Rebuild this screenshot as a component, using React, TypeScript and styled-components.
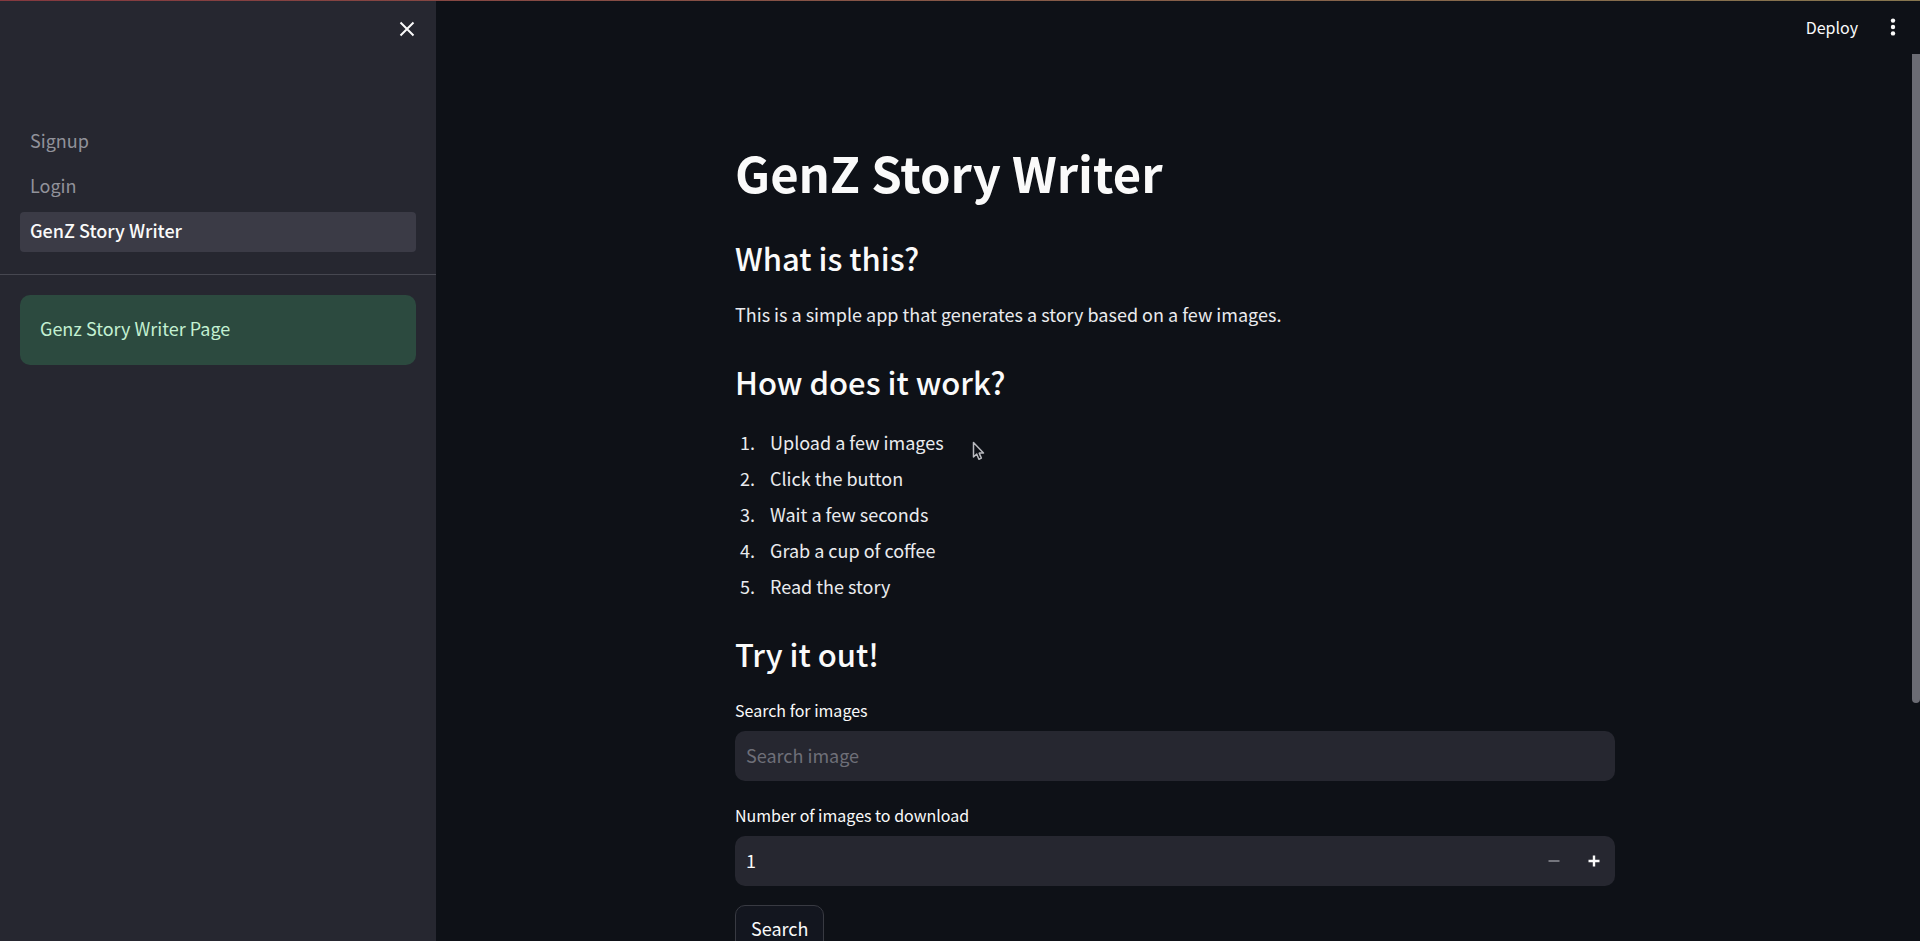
import React from "react";
import styled, { createGlobalStyle } from "styled-components";

const GlobalStyle = createGlobalStyle`
  *, *::before, *::after { box-sizing: border-box; }
  html, body, #root { height: 100%; }
  body {
    margin: 0;
    background: #0e1117;
    color: #fafafa;
    font-family: "Source Sans Pro", "Noto Sans CJK SC", "Noto Sans", sans-serif;
    font-size: 18px;
    line-height: 30px;
  }
  button, input { font: inherit; color: inherit; }
`;

const Shell = styled.div`
  position: relative;
  display: flex;
  height: 100vh;
  overflow: hidden;
`;

const Decoration = styled.div`
  position: absolute;
  inset: 0 0 auto 0;
  z-index: 1;
  height: 1px;
  background: linear-gradient(90deg, #85393f, #86764f);
`;

const Sidebar = styled.aside`
  flex: 0 0 436px;
  background: #262730;
`;

const SidebarHeader = styled.div`
  display: flex;
  justify-content: flex-end;
  padding: 15px 15px 0;
  height: 120px;
`;

const IconButton = styled.button`
  display: flex;
  align-items: center;
  justify-content: center;
  width: 28px;
  height: 28px;
  padding: 0;
  border: 0;
  background: none;
  cursor: pointer;
`;

const Nav = styled.nav`
  display: flex;
  flex-direction: column;
  gap: 5px;
  padding: 2px 20px 22px;
  border-bottom: 1px solid #464750;
`;

const NavLink = styled.a<{ $active?: boolean }>`
  padding: 3px 10px 7px;
  border-radius: 4px;
  text-decoration: none;
  color: ${(p) => (p.$active ? "#fafafa" : "#91929a")};
  background: ${(p) => (p.$active ? "#3b3b46" : "transparent")};
  font-weight: ${(p) => (p.$active ? 500 : 400)};
`;

const SuccessAlert = styled.div`
  margin: 20px;
  padding: 18px 20px 22px;
  border-radius: 10px;
  background: #2c4a3f;
  color: #c3f0d2;
`;

const Main = styled.main`
  position: relative;
  flex: 1;
  min-width: 0;
  padding-right: 6px;
`;

const Toolbar = styled.header`
  display: flex;
  justify-content: flex-end;
  align-items: center;
  gap: 21px;
  height: 54px;
  padding-right: 7px;
`;

const DeployButton = styled.button`
  padding: 0;
  border: 0;
  background: none;
  font-size: 16px;
  cursor: pointer;
`;

const Content = styled.div`
  max-width: 880px;
  margin: 0 auto;
  padding-top: 88px;
`;

const Title = styled.h1`
  margin: 0 0 36px;
  font-size: 49px;
  line-height: 60px;
  font-weight: 700;
`;

const Heading = styled.h2`
  margin: 0 0 21px;
  font-size: 31px;
  line-height: 40px;
  font-weight: 500;
`;

const Paragraph = styled.p`
  margin: 0 0 33px;
  color: #eaebee;
`;

const Steps = styled.ol`
  display: flex;
  flex-direction: column;
  gap: 6px;
  margin: 0 0 33px;
  padding: 4px 0 0 24px;
  color: #eaebee;

  li { padding-left: 11px; }
`;

const Field = styled.div`
  margin-bottom: 19px;
`;

const Label = styled.label`
  display: block;
  margin-bottom: 6px;
  font-size: 16px;
`;

const InputBox = styled.div`
  display: flex;
  align-items: center;
  height: 50px;
  padding-right: 1px;
  border-radius: 10px;
  background: #262730;
`;

const Input = styled.input`
  flex: 1;
  min-width: 0;
  height: 100%;
  padding: 0 11px 2px;
  border: 0;
  outline: 0;
  background: none;
  appearance: textfield;

  &::placeholder { color: #6e6f78; opacity: 1; }
  &::-webkit-inner-spin-button { appearance: none; margin: 0; }
`;

const StepButton = styled(IconButton)`
  width: 40px;
  height: 48px;
  &:disabled { color: #74757d; }
`;

const SearchButton = styled.button`
  height: 48px;
  padding: 0 15px 2px;
  border: 1px solid #383a42;
  border-radius: 10px;
  background: #13161f;
  line-height: 20px;
  cursor: pointer;
`;

const ScrollThumb = styled.div`
  position: absolute;
  top: 54px;
  right: 0;
  width: 8px;
  height: 69%;
  border-radius: 0 0 4px 4px;
  background: #6b6c74;
`;

const Pointer = styled.svg`
  position: absolute;
  left: 536px;
  top: 441px;
`;

const steps = [
  "Upload a few images",
  "Click the button",
  "Wait a few seconds",
  "Grab a cup of coffee",
  "Read the story",
];

export default function App() {
  return (
    <>
      <GlobalStyle />
      <Shell>
        <Decoration />
        <Sidebar>
          <SidebarHeader>
            <IconButton aria-label="Close sidebar">
              <svg width="16" height="16" viewBox="0 0 16 16" stroke="#fafafa" strokeWidth="2">
                <path d="M1.5 1.5l13 13M14.5 1.5l-13 13" />
              </svg>
            </IconButton>
          </SidebarHeader>
          <Nav>
            <NavLink href="#signup">Signup</NavLink>
            <NavLink href="#login">Login</NavLink>
            <NavLink href="#writer" $active aria-current="page">GenZ Story Writer</NavLink>
          </Nav>
          <SuccessAlert role="status">Genz Story Writer Page</SuccessAlert>
        </Sidebar>
        <Main>
          <Toolbar>
            <DeployButton>Deploy</DeployButton>
            <IconButton aria-label="Main menu">
              <svg width="6" height="18" viewBox="0 0 6 18" fill="#fafafa">
                <circle cx="3" cy="2.6" r="2.2" />
                <circle cx="3" cy="9" r="2.2" />
                <circle cx="3" cy="15.4" r="2.2" />
              </svg>
            </IconButton>
          </Toolbar>
          <Content>
            <Title>GenZ Story Writer</Title>
            <Heading>What is this?</Heading>
            <Paragraph>This is a simple app that generates a story based on a few images.</Paragraph>
            <Heading>How does it work?</Heading>
            <Steps>
              {steps.map((s) => (
                <li key={s}>{s}</li>
              ))}
            </Steps>
            <Heading>Try it out!</Heading>
            <Field>
              <Label htmlFor="query">Search for images</Label>
              <InputBox>
                <Input id="query" type="text" placeholder="Search image" />
              </InputBox>
            </Field>
            <Field>
              <Label htmlFor="count">Number of images to download</Label>
              <InputBox>
                <Input id="count" type="number" defaultValue={1} min={1} />
                <StepButton disabled aria-label="Decrease">
                  <svg width="12" height="12" viewBox="0 0 12 12" stroke="currentColor" strokeWidth="2">
                    <path d="M0.5 6h11" />
                  </svg>
                </StepButton>
                <StepButton aria-label="Increase">
                  <svg width="12" height="12" viewBox="0 0 12 12" stroke="currentColor" strokeWidth="2.4">
                    <path d="M0.5 6h11M6 0.5v11" />
                  </svg>
                </StepButton>
              </InputBox>
            </Field>
            <SearchButton>Search</SearchButton>
          </Content>
          <ScrollThumb />
          <Pointer width="13" height="20" viewBox="0 0 13 20" fill="#0e1117" stroke="#b8b9be" strokeWidth="1.5" strokeLinejoin="round">
            <path d="M1.5 1.5v14.5l3.2-3 2.2 5.2 2.5-1.1-2.2-5h4.3z" />
          </Pointer>
        </Main>
      </Shell>
    </>
  );
}
